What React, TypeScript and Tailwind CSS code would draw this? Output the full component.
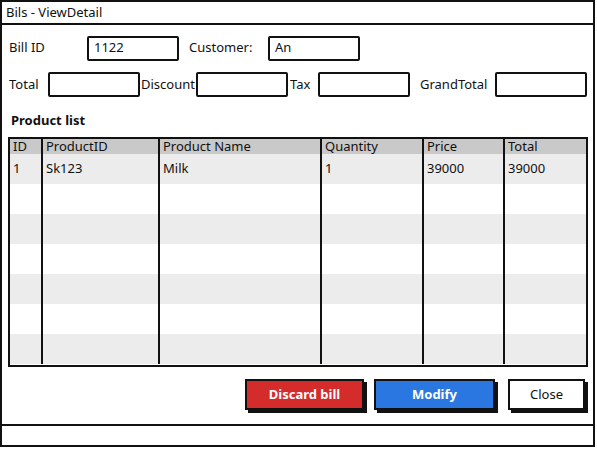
import React from "react";

const rows = [
  ["1", "Sk123", "Milk", "1", "39000", "39000"],
  ["", "", "", "", "", ""],
  ["", "", "", "", "", ""],
  ["", "", "", "", "", ""],
  ["", "", "", "", "", ""],
  ["", "", "", "", "", ""],
  ["", "", "", "", "", ""],
];
const headers = ["ID", "ProductID", "Product Name", "Quantity", "Price", "Total"];
const widths = ["w-[32px]", "w-[117px]", "w-[162px]", "w-[102px]", "w-[81px]", "w-[82px]"];

function Input({ value, w }: { value?: string; w: string }) {
  return (
    <div className={`${w} h-[25px] border-2 border-[#111] rounded-[2px] bg-white flex items-center pl-[5px] text-[13px]`}>
      {value}
    </div>
  );
}

export default function App() {
  return (
    <div className="w-[597px] h-[449px] bg-white text-[#111]" style={{ fontFamily: '"Noto Sans", "Open Sans", sans-serif' }}>
      <div className="w-[595px] h-[447px] border-2 border-[#111] flex flex-col">
        <div className="h-[23px] border-b-2 border-[#111] flex items-center pl-[4px] text-[13px]">Bils - ViewDetail</div>
        <div className="flex-1 flex flex-col pl-[6px]">
          <div className="mt-[11px] flex items-center h-[24px] text-[13px]">
            <div className="w-[79px] pl-[1px]">Bill ID</div>
            <Input value="1122" w="w-[92px]" />
            <div className="w-[89px] pl-[10px]">Customer:</div>
            <Input value="An" w="w-[92px]" />
          </div>
          <div className="mt-[12px] flex items-center h-[25px] text-[13px]">
            <div className="w-[40px] pl-[1px]">Total</div>
            <Input w="w-[92px]" />
            <div className="w-[56px] pl-[1px]">Discount</div>
            <Input w="w-[92px]" />
            <div className="w-[30px] pl-[2px]">Tax</div>
            <Input w="w-[92px]" />
            <div className="w-[85px] pl-[10px]">GrandTotal</div>
            <Input w="w-[92px]" />
          </div>
          <div className="mt-[15px] pl-[3px] text-[13px] font-bold h-[17px] leading-[17px]">Product list</div>
          <div className="mt-[8px] w-[580px] h-[230px] border-2 border-[#111] bg-white overflow-hidden">
            <table className="border-collapse text-[13px]">
              <thead>
                <tr className="bg-[#c9c9c9] h-[15px]">
                  {headers.map((h, i) => (
                    <th key={i} className={`${widths[i]} ${i > 0 ? "border-l-2 border-[#111]" : ""} text-left font-normal px-[3px] leading-[15px] align-middle`}>{h}</th>
                  ))}
                </tr>
              </thead>
              <tbody>
                {rows.map((r, ri) => (
                  <tr key={ri} className={`h-[30px] ${ri % 2 === 0 ? "bg-[#ececec]" : "bg-white"}`}>
                    {r.map((c, ci) => (
                      <td key={ci} className={`${widths[ci]} ${ci > 0 ? "border-l-2 border-[#111]" : ""} px-[3px] align-top pt-[5px] leading-[18px]`}>{c}</td>
                    ))}
                  </tr>
                ))}
              </tbody>
            </table>
          </div>
          <div className="mt-[12px] flex justify-end pr-[8px] gap-[10px] text-[13px]">
            <button className="w-[119px] h-[31px] bg-[#d42b2b] text-white font-bold border-2 border-[#111] shadow-[3px_3px_0_#111]">Discard bill</button>
            <button className="w-[121px] h-[31px] bg-[#2b77e2] text-white font-bold border-2 border-[#111] shadow-[3px_3px_0_#111] mr-[3px]">Modify</button>
            <button className="w-[77px] h-[31px] bg-white text-[#111] border-2 border-[#111] shadow-[3px_3px_0_#111]">Close</button>
          </div>
        </div>
        <div className="h-[21px] border-t-2 border-[#111]"></div>
      </div>
    </div>
  );
}
